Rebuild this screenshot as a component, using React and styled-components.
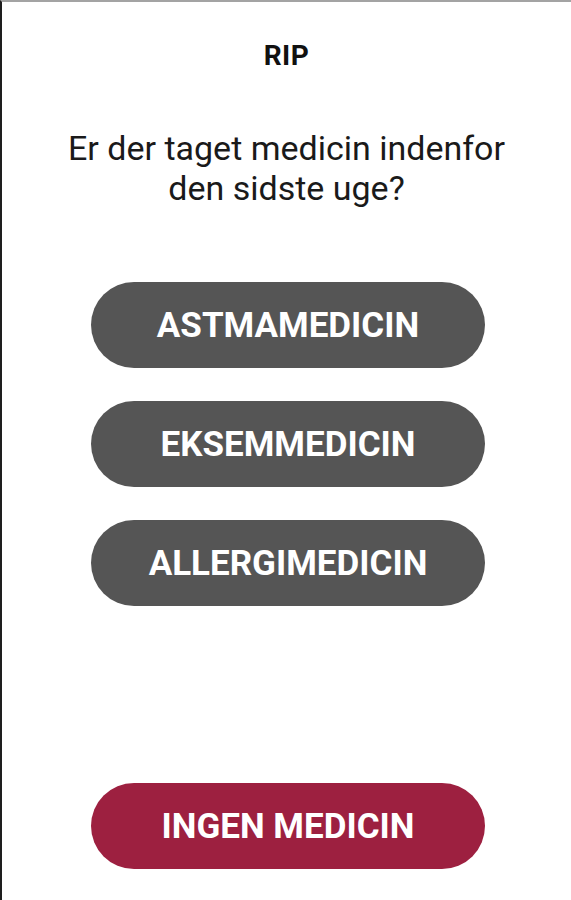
import React from 'react';
import styled, { createGlobalStyle } from 'styled-components';

const GlobalStyle = createGlobalStyle`
  html, body {
    margin: 0;
    padding: 0;
    background: #ffffff;
    font-family: Roboto, "Liberation Sans", sans-serif;
  }
`;

const Screen = styled.div`
  box-sizing: border-box;
  min-height: 100vh;
  border-top: 2px solid #a3a3a3;
  border-left: 2px solid #1e1e1e;
  display: flex;
  flex-direction: column;
  align-items: center;
  padding: 0 0 31px;
`;

const Title = styled.h1`
  margin: 39px 0 0;
  font-size: 28px;
  line-height: 30px;
  font-weight: 700;
  letter-spacing: 0.5px;
  color: #111;
`;

const Question = styled.p`
  margin: 57px 0 0;
  font-size: 34px;
  line-height: 40px;
  font-weight: 400;
  color: #1a1a1a;
  text-align: center;
`;

const Options = styled.div`
  display: flex;
  flex-direction: column;
  gap: 33px;
  margin-top: 74px;
`;

const Pill = styled.button`
  width: 394px;
  height: 86px;
  border: none;
  border-radius: 43px;
  background: ${(p) => (p.$danger ? '#9d2040' : '#555555')};
  color: #ffffff;
  font-family: Roboto, "Liberation Sans", sans-serif;
  font-size: 35px;
  font-weight: 700;
  cursor: pointer;
  margin-left: 3px;
`;

const Footer = styled.div`
  margin-top: auto;
`;

const choices = ['ASTMAMEDICIN', 'EKSEMMEDICIN', 'ALLERGIMEDICIN'];

export default function App() {
  return (
    <>
      <GlobalStyle />
      <Screen>
        <Title>RIP</Title>
        <Question>
          Er der taget medicin indenfor
          <br />
          den sidste uge?
        </Question>
        <Options>
          {choices.map((c) => (
            <Pill key={c}>{c}</Pill>
          ))}
        </Options>
        <Footer>
          <Pill $danger>INGEN MEDICIN</Pill>
        </Footer>
      </Screen>
    </>
  );
}
